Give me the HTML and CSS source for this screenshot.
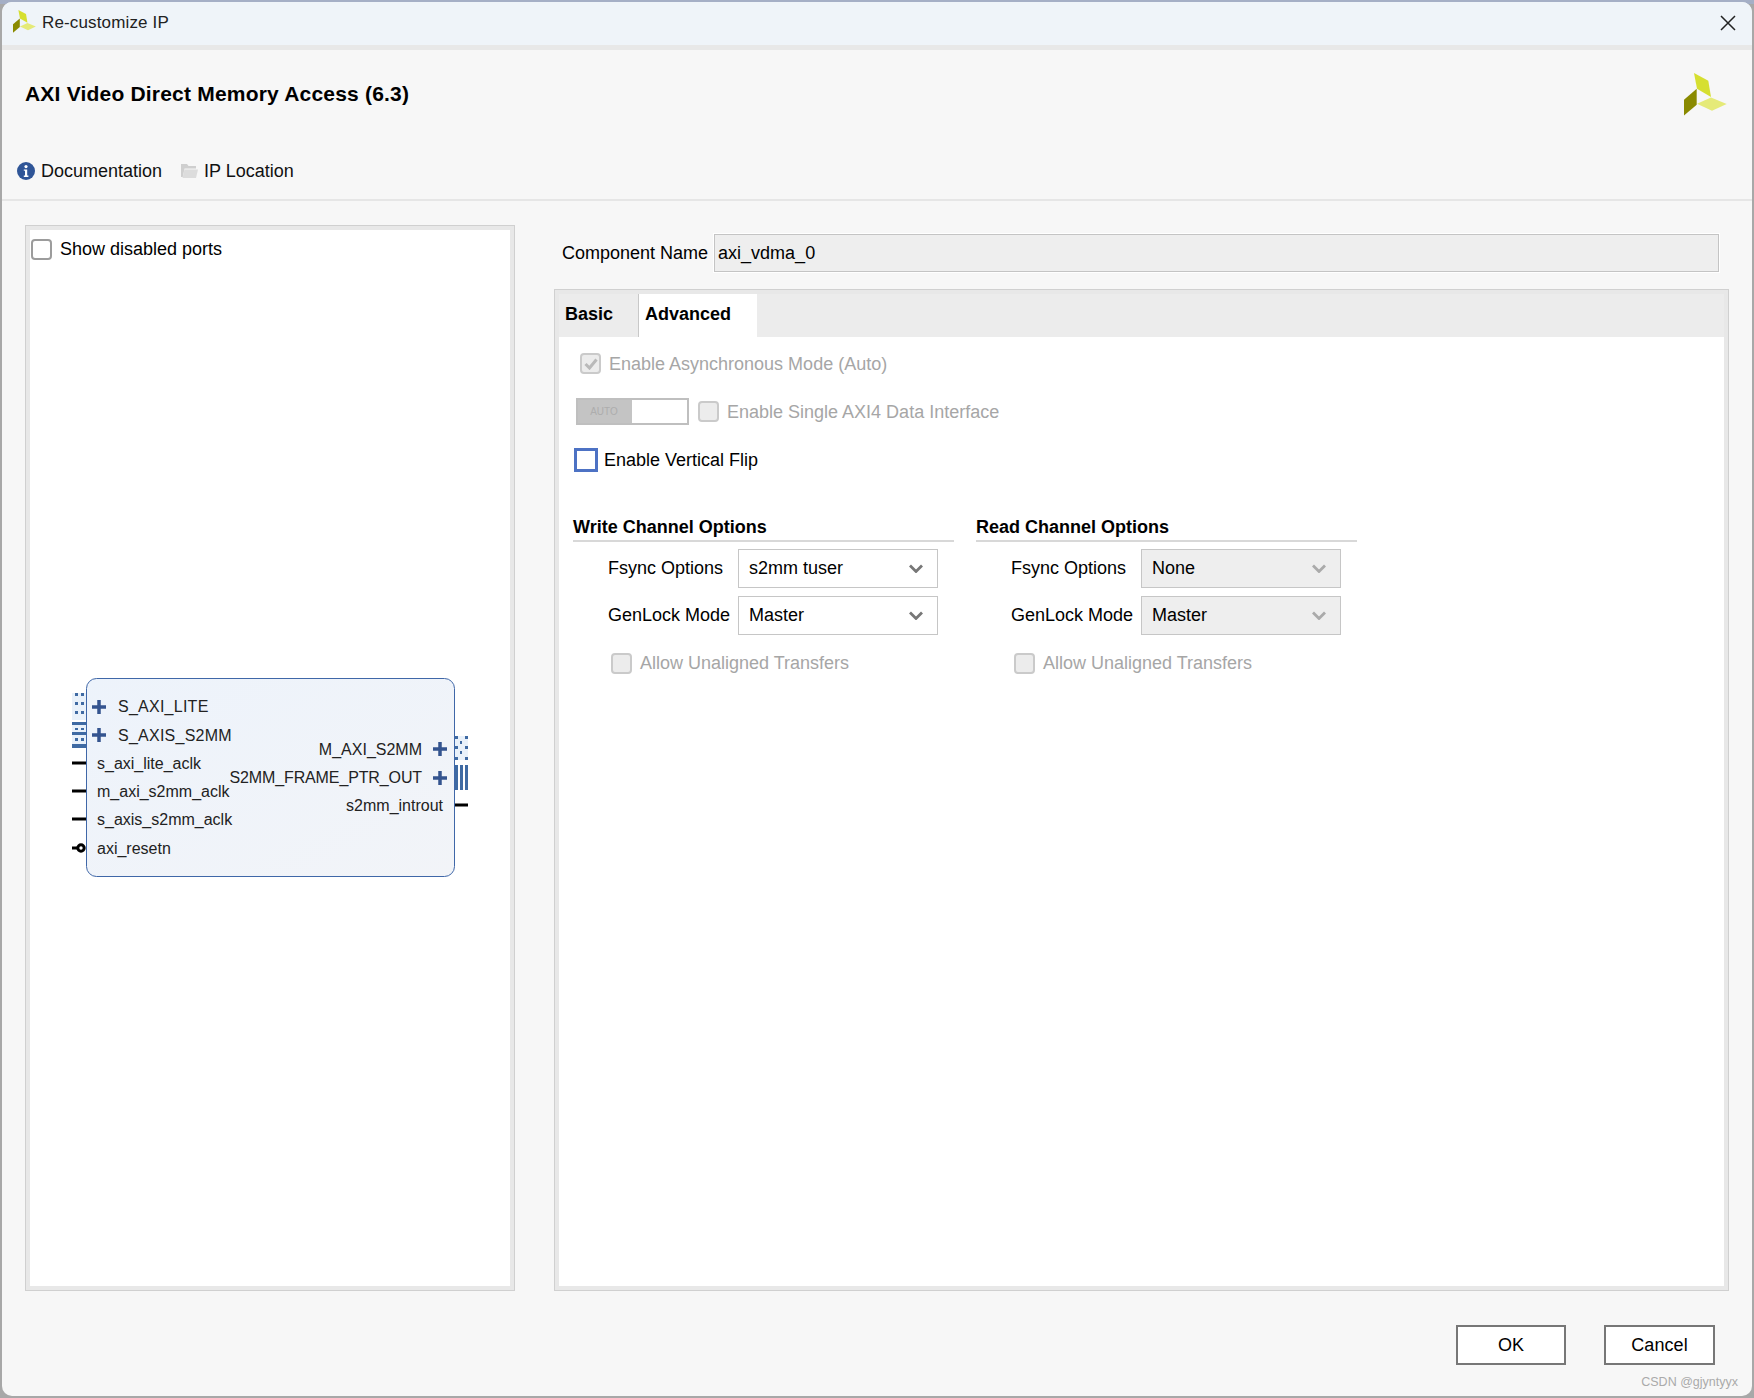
FILE: index.html
```html
<!DOCTYPE html>
<html lang="en">
<head>
<meta charset="utf-8">
<title>Re-customize IP</title>
<link rel="stylesheet" href="styles.css">
</head>
<body>
<svg class="defs" width="0" height="0" aria-hidden="true">
  <defs>
    <g id="logo">
      <polygon points="10,0 24.3,7.7 27,24 13,15.7" fill="#d6df30"/>
      <polygon points="13,30.7 27,24.4 42.7,31 28,37.7" fill="#e5ea78"/>
      <polygon points="0,26.7 12.7,15.7 12.7,31.7 0,42.4" fill="#8a8a00"/>
    </g>
    <path id="chev" d="M1 1.5 L7 7.5 L13 1.5" fill="none" stroke-width="2.8"/>
  </defs>
</svg>
<div class="window">
  <div class="titlebar">
    <svg class="title-logo" viewBox="0 0 43 43"><use href="#logo"/></svg>
    <span class="title-text">Re-customize IP</span>
    <svg class="close" viewBox="0 0 16 16"><path d="M1 1 L15 15 M15 1 L1 15" stroke="#222" stroke-width="1.5" fill="none"/></svg>
  </div>
  <div class="header">
    <div class="header-top">
      <h1 class="ip-title">AXI Video Direct Memory Access (6.3)</h1>
      <svg class="header-logo" viewBox="0 0 43 43"><use href="#logo"/></svg>
    </div>
    <div class="links">
      <span class="link">
        <svg class="ico" viewBox="0 0 18 18"><circle cx="9" cy="9" r="9" fill="#2f5597"/><circle cx="9" cy="4.6" r="1.6" fill="#fff"/><path d="M6.8 7.4h3.4v6.2h1.2v1.4H6.8v-1.4H8V8.8H6.8z" fill="#fff"/></svg>
        Documentation
      </span>
      <span class="link">
        <svg class="ico" viewBox="0 0 18 18"><path d="M1 2h6l1.5 2H16v2.5H4.5L2.8 15H1z" fill="#cfcfcf"/><path d="M4.5 7.5H18l-2 8.5H2.5z" fill="#dcdcdc"/></svg>
        IP Location
      </span>
    </div>
  </div>
  <div class="main">
    <div class="symbol-panel">
      <div class="symbol-inner">
        <label class="check-row show-ports"><span class="box box-plain"></span><span>Show disabled ports</span></label>
        <svg class="symbol" viewBox="0 0 420 220" width="420" height="220">
          <defs>
            <linearGradient id="blockfill" x1="0" y1="0" x2="1" y2="1">
              <stop offset="0" stop-color="#edf3fb"/>
              <stop offset="1" stop-color="#f2f4f8"/>
            </linearGradient>
          </defs>
          <rect class="block" x="16.5" y="0.5" width="368" height="198" rx="10" fill="url(#blockfill)"/>
          <g class="bus-l">
            <rect x="2" y="15" width="14" height="27" fill="#e9f1fa"/>
            <path class="dots" d="M5 15v3h3v-3zM11 15v3h3v-3zM5 24v3h3v-3zM11 24v3h3v-3zM5 33v3h3v-3zM11 33v3h3v-3z"/>
            <rect x="2" y="44" width="14" height="26" fill="#e9f1fa"/>
            <path class="stripes" d="M2 44h14v3H2zM2 54h14v3H2zM2 66h14v4H2zM5 50h3v2H5zM11 50h3v2h-3zM5 60h3v3H5zM11 60h3v3h-3z"/>
          </g>
          <g class="bus-r">
            <rect x="385" y="58" width="13" height="24" fill="#e9f1fa"/>
            <path class="dots" d="M385 58h3v3h-3zM395 58h3v3h-3zM390 63h2v3h-2zM385 68h3v3h-3zM395 68h3v3h-3zM390 73h2v3h-2zM385 79h3v3h-3zM395 79h3v3h-3z"/>
            <path class="stripes" d="M385 87h3v25h-3zM390 87h3v25h-3zM395 87h3v25h-3z"/>
          </g>
          <path class="pin" d="M2 85h14M2 113h14M2 141h14M2 170h8M385 127h13"/>
          <circle class="bubble" cx="11" cy="170" r="3.2"/>
          <path class="plus" d="M22 29h14M29 22v14M22 57h14M29 50v14M363 71h14M370 64v14M363 100h14M370 93v14"/>
          <text class="lbl caps" x="48" y="34">S_AXI_LITE</text>
          <text class="lbl caps" x="48" y="63">S_AXIS_S2MM</text>
          <text class="lbl" x="27" y="91">s_axi_lite_aclk</text>
          <text class="lbl" x="27" y="119">m_axi_s2mm_aclk</text>
          <text class="lbl" x="27" y="147">s_axis_s2mm_aclk</text>
          <text class="lbl" x="27" y="176">axi_resetn</text>
          <text class="lbl end" x="352" y="77">M_AXI_S2MM</text>
          <text class="lbl end tight" x="352" y="105">S2MM_FRAME_PTR_OUT</text>
          <text class="lbl end" x="373" y="133">s2mm_introut</text>
        </svg>
      </div>
    </div>
    <div class="config">
      <div class="name-row">
        <span class="name-label">Component Name</span>
        <div class="name-input">axi_vdma_0</div>
      </div>
      <div class="tab-panel">
        <div class="tab-inner">
          <div class="tabs">
            <div class="tab">Basic</div>
            <div class="tab tab-active">Advanced</div>
          </div>
          <div class="tab-body">
            <label class="check-row row-async is-disabled">
              <span class="box box-off">
                <svg class="tick" viewBox="0 0 14 12"><path d="M1.5 6 L5.5 10 L12.5 1.5" fill="none" stroke="#b9b9b9" stroke-width="3"/></svg>
              </span>
              <span>Enable Asynchronous Mode (Auto)</span>
            </label>
            <div class="row-single">
              <div class="auto-toggle"><span class="auto-on">AUTO</span><span class="auto-off"></span></div>
              <label class="check-row is-disabled"><span class="box box-off"></span><span>Enable Single AXI4 Data Interface</span></label>
            </div>
            <label class="check-row row-flip"><span class="box box-focus"></span><span>Enable Vertical Flip</span></label>
            <div class="groups">
              <section class="group">
                <h2 class="group-title">Write Channel Options</h2>
                <div class="fields">
                  <span class="field-label">Fsync Options</span>
                  <div class="select"><span>s2mm tuser</span><svg class="chev" viewBox="0 0 14 9"><use href="#chev"/></svg></div>
                  <span class="field-label">GenLock Mode</span>
                  <div class="select"><span>Master</span><svg class="chev" viewBox="0 0 14 9"><use href="#chev"/></svg></div>
                </div>
                <label class="check-row row-allow is-disabled"><span class="box box-off"></span><span class="allow-text">Allow Unaligned Transfers</span></label>
              </section>
              <section class="group">
                <h2 class="group-title">Read Channel Options</h2>
                <div class="fields">
                  <span class="field-label">Fsync Options</span>
                  <div class="select select-off"><span>None</span><svg class="chev" viewBox="0 0 14 9"><use href="#chev"/></svg></div>
                  <span class="field-label">GenLock Mode</span>
                  <div class="select select-off"><span>Master</span><svg class="chev" viewBox="0 0 14 9"><use href="#chev"/></svg></div>
                </div>
                <label class="check-row row-allow is-disabled"><span class="box box-off"></span><span class="allow-text">Allow Unaligned Transfers</span></label>
              </section>
            </div>
          </div>
        </div>
      </div>
    </div>
  </div>
  <div class="footer">
    <button class="btn btn-ok" type="button">OK</button>
    <button class="btn btn-cancel" type="button">Cancel</button>
    <span class="watermark">CSDN @gjyntyyx</span>
  </div>
</div>
</body>
</html>
```
FILE: styles.css
```css
* { box-sizing: border-box; }
html, body { margin: 0; height: 100%; }
body {
  width: 1754px;
  height: 1398px;
  padding: 2px;
  background: linear-gradient(#a5afc6 0 4px, #a8a8a8 4px);
  font-family: "Liberation Sans", Arial, sans-serif;
  font-size: 18px;
  color: #000;
  overflow: hidden;
}
.defs { position: absolute; }
.window {
  width: 1750px;
  height: 1394px;
  display: flex;
  flex-direction: column;
  background: #f7f7f7;
  border-radius: 10px;
  overflow: hidden;
}
.titlebar {
  height: 48px;
  flex: none;
  display: flex;
  align-items: center;
  padding: 0 16px 2px 11px;
  background: #eff4f9;
  border-bottom: 5px solid #e8e8e8;
}
.title-logo { width: 23px; height: 23px; flex: none; margin-top: -3px; }
.title-text { margin-left: 6px; flex: 1; color: #222; font-size: 17px; letter-spacing: 0.15px; }
.close { width: 16px; height: 16px; flex: none; }
.header {
  height: 151px;
  flex: none;
  padding-top: 21px;
  border-bottom: 2px solid #e6e6e6;
}
.header-top {
  display: flex;
  justify-content: space-between;
  align-items: flex-start;
  padding: 0 25px 0 23px;
  height: 67px;
}
.ip-title {
  margin: 11px 0 0;
  font-size: 21px;
  line-height: 24px;
  font-weight: 700;
  letter-spacing: 0.2px;
}
.header-logo { width: 43px; height: 43px; margin-top: 2px; }
.links {
  display: flex;
  gap: 18px;
  padding: 0 0 0 15px;
  margin-top: 22px;
}
.link { display: flex; align-items: center; gap: 6px; line-height: 22px; color: #111; }
.ico { width: 18px; height: 18px; flex: none; }
.main {
  flex: 1;
  display: flex;
  gap: 39px;
  padding: 24px 23px 0 23px;
  min-height: 0;
}
.symbol-panel {
  width: 490px;
  flex: none;
  border: 1px solid #d0d0d0;
}
.symbol-inner {
  position: relative;
  height: 100%;
  border: 4px solid #e8e8e8;
  background: #fff;
  padding: 8px 1px;
}
.check-row { display: flex; align-items: center; line-height: 22px; }
.show-ports { gap: 8px; }
.box {
  width: 21px;
  height: 21px;
  flex: none;
  display: flex;
  align-items: center;
  justify-content: center;
  border-radius: 4px;
}
.box-plain { background: #fff; border: 2px solid #9c9c9c; }
.box-off { background: #ececec; border: 2px solid #cacaca; }
.box-focus {
  width: 24px;
  height: 24px;
  border-radius: 0;
  background: #fff;
  border: 3px solid #4d72c4;
}
.tick { width: 14px; height: 12px; }
.is-disabled { color: #a6a6a6; gap: 8px; }
.symbol {
  position: absolute;
  left: 40px;
  top: 448px;
  overflow: visible;
}
.block { stroke: #3f67a8; stroke-width: 1; }
.lbl { font: 16px "Liberation Sans", Arial, sans-serif; fill: #222; }
.caps { letter-spacing: 0.25px; }
.tight { letter-spacing: -0.12px; }
.end { text-anchor: end; }
.pin { stroke: #000; stroke-width: 3; fill: none; }
.bubble { fill: #fff; stroke: #000; stroke-width: 3; }
.plus { stroke: #34548f; stroke-width: 3.5; fill: none; }
.dots { fill: #3f6aa3; }
.stripes { fill: #3f6aa3; }
.config {
  flex: 1;
  display: flex;
  flex-direction: column;
  min-width: 0;
}
.name-row {
  display: flex;
  align-items: center;
  gap: 6px;
  margin: 9px 10px 17px 8px;
}
.name-label { flex: none; padding-top: 1px; }
.name-input {
  flex: 1;
  height: 38px;
  line-height: 36px;
  padding: 0 3px;
  background: #eeeeee;
  border: 1px solid #c4c4c4;
  box-shadow: 0 0 0 1px #fff;
}
.tab-panel { flex: 1; border: 1px solid #d0d0d0; min-height: 0; }
.tab-inner {
  height: 100%;
  display: flex;
  flex-direction: column;
  border: 4px solid #e8e8e8;
}
.tabs { height: 43px; flex: none; display: flex; background: #ececec; }
.tab {
  width: 80px;
  padding-left: 6px;
  line-height: 41px;
  font-weight: 700;
  border-right: 1px solid #c8c8c8;
}
.tab-active {
  width: 118px;
  background: #fff;
  border-right: 0;
}
.tab-body { flex: 1; background: #fff; padding-top: 16px; }
.row-async { margin-left: 21px; height: 21px; }
.row-single {
  display: flex;
  align-items: center;
  gap: 9px;
  height: 27px;
  margin: 24px 0 0 17px;
}
.auto-toggle {
  width: 113px;
  height: 27px;
  display: flex;
  border: 2px solid #bfbfbf;
  background: #fff;
}
.auto-on {
  width: 54px;
  background: #c4c4c4;
  color: #adadad;
  font-size: 10px;
  line-height: 23px;
  text-align: center;
  padding-right: 2px;
}
.auto-off { flex: 1; }
.row-flip { margin: 23px 0 0 15px; gap: 6px; height: 24px; }
.groups { display: flex; gap: 22px; margin: 44px 0 0 14px; }
.group { width: 381px; }
.group-title {
  margin: 0;
  font-size: 18px;
  line-height: 22px;
  font-weight: 700;
  padding-bottom: 2px;
  border-bottom: 2px solid #d8d8d8;
}
.fields {
  display: grid;
  grid-template-columns: 130px 200px;
  row-gap: 8px;
  align-items: center;
  margin: 7px 0 0 35px;
}
.select {
  height: 39px;
  display: flex;
  align-items: center;
  justify-content: space-between;
  padding: 0 14px 0 10px;
  background: #fff;
  border: 1px solid #c6c6c6;
  stroke: #777;
}
.select-off { background: #eeeeee; stroke: #aaa; }
.chev { width: 14px; height: 9px; }
.row-allow { margin: 18px 0 0 38px; height: 21px; }
.allow-text { margin-top: -1px; }
.footer {
  position: relative;
  height: 105px;
  flex: none;
  display: flex;
  justify-content: flex-end;
  gap: 38px;
  padding: 34px 37px 0 0;
}
.btn {
  width: 110px;
  height: 40px;
  padding: 0;
  background: #fff;
  border: 2px solid #777;
  font: inherit;
  letter-spacing: 0.1px;
  color: #000;
}
.btn-cancel { width: 111px; }
.watermark {
  position: absolute;
  right: 14px;
  bottom: 6px;
  font-size: 12.5px;
  line-height: 16px;
  color: #aaa;
}
```
